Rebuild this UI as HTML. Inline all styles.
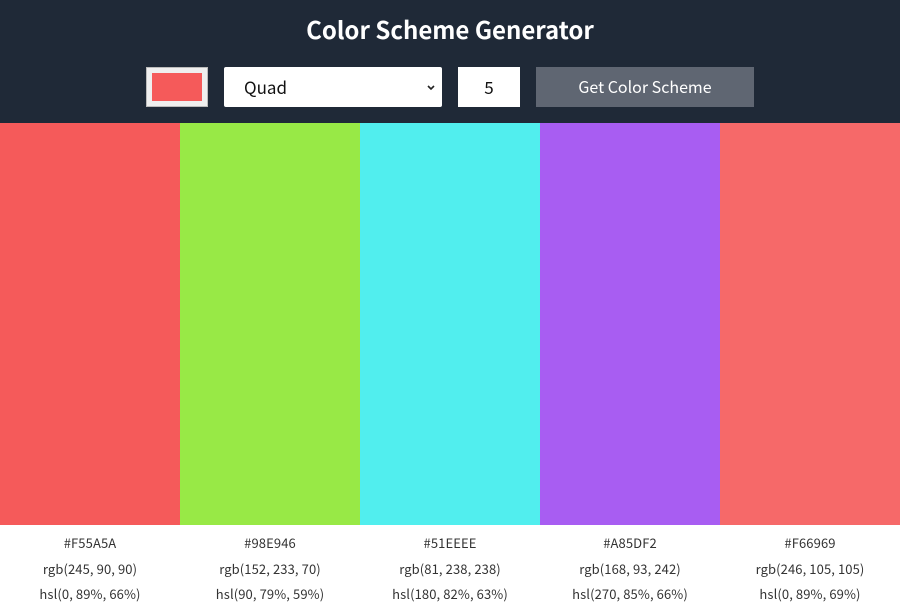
<!DOCTYPE html>
<html><head><meta charset="utf-8"><style>
*{margin:0;padding:0;box-sizing:border-box}
body{width:900px;height:600px;overflow:hidden;background:#fff;font-family:"Noto Sans CJK SC","Liberation Sans",sans-serif;position:relative}
.hdr{position:absolute;left:0;top:0;width:900px;height:123px;background:#1f2937}
h1{position:absolute;top:12px;left:0;width:900px;text-align:center;color:#fff;font-size:24px;font-weight:700;line-height:34px}
.ci{position:absolute;left:146px;top:67px;width:62px;height:40px;background:#efefef;border:1px solid #bbb}
.ci div{position:absolute;left:5px;top:5px;width:50px;height:28px;background:#f55a5a}
.sel{position:absolute;left:224px;top:67px;width:218px;height:40px;background:#fff;border-radius:2px;font-size:17px;line-height:40px;padding-left:20px;color:#111}
.sel svg{position:absolute;right:6px;top:17px}
.num{position:absolute;left:458px;top:67px;width:62px;height:40px;background:#fff;font-size:17px;line-height:40px;text-align:center;color:#111}
.btn{position:absolute;left:536px;top:67px;width:218px;height:40px;background:#5f6672;color:#fff;font-size:16px;line-height:39px;text-align:center}
.cols{position:absolute;top:123px;left:0;display:flex}
.col{width:180px}
.bar{height:402px}
.t{text-align:center;font-size:13px;color:#333;height:25.5px;line-height:25px;letter-spacing:0.1px}
.t:nth-child(2){margin-top:5px}
</style></head><body>
<div class="hdr">
<h1>Color Scheme Generator</h1>
<div class="ci"><div></div></div>
<div class="sel">Quad<svg width="10" height="8" viewBox="0 0 10 8"><path d="M2 2l3 3 3-3" stroke="#222" stroke-width="1.6" fill="none"/></svg></div>
<div class="num">5</div>
<div class="btn">Get Color Scheme</div>
</div>
<div class="cols">
<div class="col"><div class="bar" style="background:#F55A5A"></div><div class="t">#F55A5A</div><div class="t">rgb(245, 90, 90)</div><div class="t">hsl(0, 89%, 66%)</div></div>
<div class="col"><div class="bar" style="background:#98E946"></div><div class="t">#98E946</div><div class="t">rgb(152, 233, 70)</div><div class="t">hsl(90, 79%, 59%)</div></div>
<div class="col"><div class="bar" style="background:#51EEEE"></div><div class="t">#51EEEE</div><div class="t">rgb(81, 238, 238)</div><div class="t">hsl(180, 82%, 63%)</div></div>
<div class="col"><div class="bar" style="background:#A85DF2"></div><div class="t">#A85DF2</div><div class="t">rgb(168, 93, 242)</div><div class="t">hsl(270, 85%, 66%)</div></div>
<div class="col"><div class="bar" style="background:#F66969"></div><div class="t">#F66969</div><div class="t">rgb(246, 105, 105)</div><div class="t">hsl(0, 89%, 69%)</div></div>
</div>
</body></html>
